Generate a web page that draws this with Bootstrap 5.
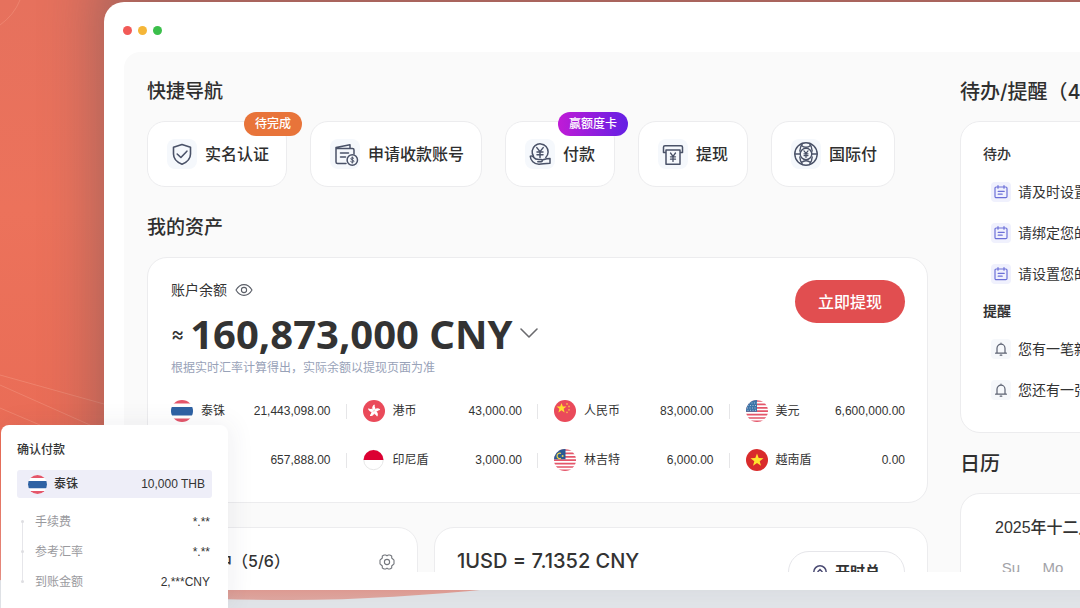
<!DOCTYPE html>
<html lang="zh-CN">
<head>
<meta charset="utf-8">
<meta name="viewport" content="width=device-width, initial-scale=1">
<title>账户总览</title>
<link href="https://cdn.jsdelivr.net/npm/bootstrap@5.3.0/dist/css/bootstrap.min.css" rel="stylesheet">
<style>
  body { font-family: Inter, "Noto Sans CJK SC", sans-serif; font-size: 14px; line-height: 20px; color: #333; background: #e2e5e9; }
  button { font-family: inherit; }
  .stage { padding: 2px 0 18px 104px; }
  .backdrop-art { position: absolute; inset: 0; width: 100%; height: 100%; }
  .app-window { margin-right: -240px; padding: 50px 20px 18px; border-radius: 20px; background: #fff; box-shadow: -6px -36px 56px rgba(70, 80, 92, .42); }
  .window-dots { position: absolute; top: 24px; left: 19px; }
  .window-dots span { width: 9px; height: 9px; border-radius: 50%; }
  .panel { padding: 26px 23px 0; border-radius: 16px 16px 0 0; background: #fafafa; }
  .side-col { width: 317px; }
  .section-title { font-size: 19px; line-height: 28px; font-weight: 500; margin: 0 0 15px; color: #2f2f2f; }
  .side-col .section-title { font-size: 20px; }
  .tile { background: #fff; border: 1px solid #ececee; border-radius: 20px; }

  .quick { height: 66px; min-width: 110px; padding: 0 17px 0 19px; border-radius: 18px; font-size: 16px; font-weight: 500; color: #2f2f2f; }
  .quick .icon-box { width: 30px; height: 30px; margin-right: 8px; border-radius: 8px; background: #f5f8fc; }
  .quick-row { gap: 23px; }
  .tag { position: absolute; top: -10px; right: -14px; height: 24px; line-height: 24px; padding: 0 11px; border-radius: 12px; font-size: 12px; font-weight: 500; color: #fff; }
  .tag-todo { background: #e8743a; right: -16px; }
  .tag-card { background: linear-gradient(90deg, #c01bd6, #6420e4); }

  .assets { padding: 22px 22px 31px 23px; }
  .amount { font-family: "Noto Sans", "Open Sans", sans-serif; font-size: 40px; line-height: 44px; font-weight: 700; }
  .approx { font-size: 20px; line-height: 44px; }
  .hint { font-size: 12px; line-height: 16px; color: #98a2b8; }
  .btn-withdraw { width: 110px; height: 43px; border: 0; border-radius: 22px; background: #e14e50; color: #fff; font-size: 16px; font-weight: 500; }
  .currency-grid { display: grid; grid-template-columns: repeat(4, minmax(0, 1fr)); gap: 27px 32px; margin-top: 24px; font-size: 12px; line-height: 22px; }
  .currency { gap: 8px; }
  .currency:not(:nth-child(4n+1))::before { content: ""; position: absolute; left: -17px; top: 4px; width: 1px; height: 15px; background: #e6e6e8; }
  .figures { font-family: "Liberation Sans", "Noto Sans CJK SC", sans-serif; }

  .lower { gap: 16px; }
  .lower .tile { padding: 19px 22px 40px; min-height: 120px; }
  .progress-tile { width: 271px; }
  .tile-title { font-size: 16px; line-height: 28px; font-weight: 500; margin: 0; }
  .rate { font-size: 20px; line-height: 28px; font-weight: 500; margin: 0; }
  .btn-total { height: 42px; margin-top: 4px; padding: 0 24px; gap: 8px; border: 1px solid #e6e6ea; border-radius: 21px; background: #fff; font-size: 15px; font-weight: 700; color: #333; }

  .todo { padding: 22px 22px 32px; }
  .todo h3 { font-size: 14px; line-height: 20px; font-weight: 500; margin: 0; }
  .todo ul { margin: 18px 0 17px; padding-left: 8px; gap: 21px; }
  .todo ul:last-child { margin-bottom: 0; }
  .todo li { gap: 7px; white-space: nowrap; }
  .todo .icon-box { width: 20px; height: 20px; border-radius: 4px; background: #f0f1fd; }
  .todo .icon-box.bell { background: #f6f8fb; }
  .calendar { padding: 22px 0 40px 34px; margin-right: -40px; font-family: "Liberation Sans", "Noto Sans CJK SC", sans-serif; }
  .calendar h3 { font-size: 16px; line-height: 24px; font-weight: 500; margin: 0 0 18px; }
  .weekdays { display: grid; grid-template-columns: repeat(7, 42px); margin-left: -5px; text-align: center; color: #a3a3a8; font-size: 15px; }

  .pay-card { position: absolute; left: 1px; bottom: 0; width: 227px; padding: 17px 16px 18px; border-radius: 8px 8px 0 0; background: #fff; box-shadow: 4px -2px 24px rgba(60, 60, 80, .07); font-size: 12px; line-height: 16px; }
  .pay-card h2 { font-size: 12px; line-height: 16px; font-weight: 500; margin: 0 0 12px; }
  .pay-target { height: 28px; padding: 0 7px 0 11px; gap: 7px; border-radius: 3px; background: #eeeef8; }
  .pay-lines { margin: 16px 0 0; gap: 14px; padding: 0 2px 0 18px; }
  .pay-lines::before { content: ""; position: absolute; left: 5px; top: 8px; bottom: 8px; width: 1px; background: #e6e6ea; }
  .pay-lines > div::before { content: ""; position: absolute; left: -14px; top: 6px; width: 3px; height: 3px; border-radius: 50%; background: #dedee2; }
  .pay-lines dt { font-weight: 400; color: #9a9a9e; }
</style>
</head>
<body class="vh-100 overflow-hidden">

<svg width="0" height="0" class="position-absolute" aria-hidden="true">
  <defs>
    <clipPath id="round"><circle cx="11" cy="11" r="11"/></clipPath>
    <symbol id="flag-th" viewBox="0 0 22 22"><g clip-path="url(#round)"><path fill="#fff" d="M0 0h22v22H0z"/><path fill="#e4566a" d="M0 0h22v3.600H0zM0 18.600h22V22H0z"/><path fill="#2f62a3" d="M0 7h22v8.400H0z"/></g></symbol>
    <symbol id="i-todo" viewBox="0 0 20 20"><g fill="none" stroke="#6c70d8" stroke-width="1.200" stroke-linecap="round"><rect x="4" y="5" width="12" height="10.600" rx="1.200"/><path d="M7 3.600v2.600M13 3.600v2.600M7.200 9.400h6M7.200 12.200h4"/></g></symbol>
    <symbol id="i-bell" viewBox="0 0 20 20"><g fill="none" stroke="#5c6272" stroke-width="1.200" stroke-linecap="round" stroke-linejoin="round"><path d="M6 14V9.200a4 4 0 0 1 8 0V14M4.600 14.200h10.800M10 5.200V4M9.200 16.200h1.600"/></g></symbol>
  </defs>
</svg>

<div class="stage d-flex h-100 position-relative overflow-hidden">
  <svg class="backdrop-art" viewBox="0 0 1080 608" preserveAspectRatio="none" aria-hidden="true">
    <defs>
      <linearGradient id="coral" x1="0" y1="0" x2="0" y2="1"><stop offset="0" stop-color="#e6715d"/><stop offset=".35" stop-color="#ec725b"/><stop offset=".75" stop-color="#e96c56"/><stop offset=".95" stop-color="#ea8a7c"/><stop offset="1" stop-color="#e0a8a1"/></linearGradient>
    </defs>
    <path fill="url(#coral)" d="M0 0H1080V480C900 520 640 580 490 589C430 595 360 600 290 600C180 600 60 592 0 580Z"/>
    <g fill="none" stroke="#f3937d" stroke-width="1" opacity=".55"><path d="M0 375L104 404M0 385L90 425M0 408L40 425M0 25Q14 15 20 0"/></g>
  </svg>

  <div class="app-window position-relative d-flex flex-column flex-grow-1">
    <div class="window-dots d-flex" style="gap:6px">
      <span style="background:#f25a57"></span><span style="background:#f5b638"></span><span style="background:#3bbf4b"></span>
    </div>

    <div class="panel d-flex flex-grow-1 overflow-hidden" style="gap:32px;min-height:0">
      <main class="flex-grow-1" style="min-width:0">
        <h2 class="section-title">快捷导航</h2>
        <div class="quick-row d-flex">
          <button type="button" class="quick tile d-flex align-items-center position-relative">
            <span class="icon-box"><svg class="d-block" width="30" height="30" fill="none" stroke="#4a5268" stroke-width="1.600" stroke-linecap="round" stroke-linejoin="round"><path d="M15 5.500l8.500 2.800v6.700c0 5-3.700 8.300-8.500 10.200c-4.800-1.900-8.500-5.200-8.500-10.200V8.300z"/><path d="M10.200 15l3.700 3.500 6-6.300"/></svg></span>
            实名认证<span class="tag tag-todo">待完成</span>
          </button>
          <button type="button" class="quick tile d-flex align-items-center">
            <span class="icon-box"><svg class="d-block" width="30" height="30" fill="none" stroke="#4a5268" stroke-width="1.500" stroke-linecap="round" stroke-linejoin="round"><path d="M16 24.500H7.500a1.500 1.500 0 0 1-1.500-1.500V8.500L20 5.800v3.700M6 9.500h16.500a1.500 1.500 0 0 1 1.500 1.500v4M10.500 14h8M10.500 18h5"/><circle cx="22.300" cy="21" r="5.200"/><path stroke-width="1" d="M23.800 19.300c-.8-1-3-.7-3 .5 0 1.400 3.200.9 3.200 2.400 0 1.200-2.400 1.400-3.300.4M22.300 17.900v6.200"/></svg></span>
            申请收款账号
          </button>
          <button type="button" class="quick tile d-flex align-items-center position-relative">
            <span class="icon-box"><svg class="d-block" width="30" height="30" fill="none" stroke="#4a5268" stroke-width="1.500" stroke-linecap="round" stroke-linejoin="round"><path d="M8.600 17.500a8 8 0 1 1 12.200 1"/><path d="M11.800 8.600l3.200 4 3.200-4M15 12.600v6M12 13h6M12 15.700h6"/><path d="M5.300 17.300c1.500-1 2.700 0 3.500 1.200 1 1.500 2.700 2 5 2h2.400c1.500 0 1.500 2.200 0 2.200h-3.400M5.300 17.300c0 4 3.700 8 8.700 8 4 0 5.500-1 11-1v-4.800c-4 0-4.500.5-7.600 1.500"/></svg></span>
            付款<span class="tag tag-card">赢额度卡</span>
          </button>
          <button type="button" class="quick tile d-flex align-items-center">
            <span class="icon-box"><svg class="d-block" width="30" height="30" fill="none" stroke="#4a5268" stroke-width="1.500" stroke-linecap="round" stroke-linejoin="round"><path d="M8 13.500H5.500V8.300a1.500 1.500 0 0 1 1.500-1.500h16a1.500 1.500 0 0 1 1.500 1.500v5.200H22M8 11h14v14.200H8z"/><path stroke-width="1.300" d="M12.500 14l2.500 3.400 2.500-3.400M15 17.400v5M12.500 17.800h5M12.500 20.200h5"/></svg></span>
            提现
          </button>
          <button type="button" class="quick tile d-flex align-items-center">
            <span class="icon-box"><svg class="d-block" width="30" height="30" fill="none" stroke="#4a5268" stroke-width="1.400" stroke-linecap="round" stroke-linejoin="round"><circle cx="15" cy="15" r="11.200"/><circle cx="15" cy="15" r="5.800"/><path d="M3.800 15H9M21 15h5.200M11.500 4.500C9.800 6.500 9 8.800 8.800 12M18.500 4.500c1.700 2 2.500 4.300 2.700 7.500M11.500 25.500C9.800 23.500 9 21.200 8.800 18M18.500 25.500c1.700-2 2.500-4.300 2.700-7.500M10.500 6.500c2.500 2.400 6.500 2.400 9 0M10.500 23.500c2.500-2.400 6.500-2.400 9 0"/><path stroke-width="1.200" d="M13 11.800l2 2.600 2-2.600M15 14.400v4M13 14.800h4M13 16.600h4"/></svg></span>
            国际付
          </button>
        </div>

        <h2 class="section-title" style="margin-top:27px">我的资产</h2>
        <section class="assets tile">
          <div class="d-flex justify-content-between align-items-start">
            <div>
              <div class="d-flex align-items-center" style="gap:8px">账户余额
                <svg width="18" height="14" fill="none" stroke="#5b5f68" stroke-width="1.100"><path d="M1 7C3 3.500 6 1.600 9 1.600S15 3.500 17 7c-2 3.500-5 5.400-8 5.400S3 10.500 1 7z"/><circle cx="9" cy="7" r="2.600"/></svg>
              </div>
              <div class="d-flex align-items-center" style="gap:6px;margin-top:12px">
                <span class="approx">≈</span><span class="amount">160,873,000 CNY</span>
                <svg width="20" height="20" fill="none" stroke="#6a6a6e" stroke-width="1.600" stroke-linecap="round" stroke-linejoin="round"><path d="M2 5l8 8 8-8"/></svg>
              </div>
              <div class="hint" style="margin-top:4px">根据实时汇率计算得出，实际余额以提现页面为准</div>
            </div>
            <button type="button" class="btn-withdraw">立即提现</button>
          </div>

          <div class="currency-grid">
            <div class="currency d-flex align-items-center position-relative"><svg width="22" height="22"><use href="#flag-th"/></svg><span>泰铢</span><span class="figures ms-auto">21,443,098.00</span></div>
            <div class="currency d-flex align-items-center position-relative"><svg width="22" height="22"><circle cx="11" cy="11" r="11" fill="#ea4a5a"/><g fill="#fff"><path id="petal" d="M11 10.800C8.800 9.800 8.400 6.600 11.200 4.600C12.400 5.200 11.200 6.600 12.100 7.600C12.800 8.800 12 10.200 11 10.800z"/><use href="#petal" transform="rotate(72 11 11)"/><use href="#petal" transform="rotate(144 11 11)"/><use href="#petal" transform="rotate(216 11 11)"/><use href="#petal" transform="rotate(288 11 11)"/></g></svg><span>港币</span><span class="figures ms-auto">43,000.00</span></div>
            <div class="currency d-flex align-items-center position-relative"><svg width="22" height="22"><circle cx="11" cy="11" r="11" fill="#ea4a5a"/><path fill="#ffe02e" d="M7.500 3l1.300 3.400 3.700.1-2.900 2.300 1 3.600-3.100-2.100-3.100 2.100 1-3.600L2.500 6.500l3.700-.1z"/><g fill="#f7b24a"><circle cx="13" cy="4" r=".9"/><circle cx="15" cy="6.500" r=".9"/><circle cx="15" cy="9.800" r=".9"/><circle cx="13" cy="12.300" r=".9"/></g></svg><span>人民币</span><span class="figures ms-auto">83,000.00</span></div>
            <div class="currency d-flex align-items-center position-relative"><svg width="22" height="22"><g clip-path="url(#round)"><path fill="#fff" d="M0 0h22v22H0z"/><path stroke="#e4566a" stroke-width="1.700" d="M0 1h22M0 4.400h22M0 7.800h22M0 11.200h22M0 14.600h22M0 18h22M0 21.400h22"/><path fill="#3d74a8" d="M0 0h11v11.800H0z"/><path stroke="#b7cde0" stroke-width=".9" stroke-dasharray="1 1.500" d="M3 3h8M1.500 5.500H11M1 8h10M1.500 10.300H11"/></g></svg><span>美元</span><span class="figures ms-auto">6,600,000.00</span></div>
            <div class="currency d-flex align-items-center position-relative"><span class="figures ms-auto">657,888.00</span></div>
            <div class="currency d-flex align-items-center position-relative"><svg width="22" height="22"><circle cx="10.500" cy="11" r="9.700" fill="#fff" stroke="#ddd" stroke-width=".7"/><path fill="#dc0032" d="M.5 11a10 10 0 0 1 20 0z"/></svg><span>印尼盾</span><span class="figures ms-auto">3,000.00</span></div>
            <div class="currency d-flex align-items-center position-relative"><svg width="22" height="22"><g clip-path="url(#round)"><path fill="#fff" d="M0 0h22v22H0z"/><path stroke="#e4566a" stroke-width="1.700" d="M0 1h22M0 4.400h22M0 7.800h22M0 11.200h22M0 14.600h22M0 18h22M0 21.400h22"/><path fill="#2b5a94" d="M0 0h11.500v10.300H0z"/><path fill="none" stroke="#f2d64a" stroke-width="1.200" d="M7 4.500a2.700 2.700 0 1 0 0 4.800"/><circle cx="8.600" cy="6.900" r="1" fill="#f2d64a"/></g></svg><span>林吉特</span><span class="figures ms-auto">6,000.00</span></div>
            <div class="currency d-flex align-items-center position-relative"><svg width="22" height="22"><circle cx="11" cy="11" r="11" fill="#d92b2b"/><path fill="#ffe52e" d="M11 4.500l1.700 4.500 4.800.2-3.800 3 1.300 4.600-4-2.700-4 2.700 1.300-4.600-3.800-3 4.800-.2z"/></svg><span>越南盾</span><span class="figures ms-auto">0.00</span></div>
          </div>
        </section>

        <div class="lower d-flex mt-4">
          <section class="progress-tile tile d-flex justify-content-between align-items-start">
            <h3 class="tile-title" style="padding-left:14px">进行中（5/6）</h3>
            <svg width="16" height="16" style="margin-top:7px" fill="none" stroke="#74777d" stroke-width="1.100" stroke-linejoin="round" aria-hidden="true"><path d="M5.200 1h1.500l1.300.9L9.300 1h1.500l1.900 1v2l2.300 2.200v3.600L12.700 12v2l-1.900 1H9.300L8 14.100l-1.300.9H5.200l-1.900-1v-2L1 9.800V6.200L3.300 4V2z"/><circle cx="8" cy="8" r="2.600"/></svg>
          </section>
          <section class="tile flex-grow-1 d-flex justify-content-between align-items-start">
            <h3 class="rate">1USD = 7.1352 CNY</h3>
            <button type="button" class="btn-total d-flex align-items-center"><svg width="14" height="16" fill="none" stroke="#4a4a72" stroke-width="1.500"><path d="M.8 8a6.200 6.200 0 0 1 12.400 0M5 11V7.500l2-2 2 2V11"/></svg>开时总</button>
          </section>
        </div>
      </main>

      <aside class="side-col flex-shrink-0">
        <h2 class="section-title">待办/提醒（4）</h2>
        <section class="todo tile">
          <h3>待办</h3>
          <ul class="list-unstyled d-flex flex-column">
            <li class="d-flex"><span class="icon-box"><svg class="d-block" width="20" height="20"><use href="#i-todo"/></svg></span>请及时设置支付密码</li>
            <li class="d-flex"><span class="icon-box"><svg class="d-block" width="20" height="20"><use href="#i-todo"/></svg></span>请绑定您的手机号</li>
            <li class="d-flex"><span class="icon-box"><svg class="d-block" width="20" height="20"><use href="#i-todo"/></svg></span>请设置您的安全问题</li>
          </ul>
          <h3 class="fw-bold">提醒</h3>
          <ul class="list-unstyled d-flex flex-column">
            <li class="d-flex"><span class="icon-box bell"><svg class="d-block" width="20" height="20"><use href="#i-bell"/></svg></span>您有一笔新的收款</li>
            <li class="d-flex"><span class="icon-box bell"><svg class="d-block" width="20" height="20"><use href="#i-bell"/></svg></span>您还有一张优惠券</li>
          </ul>
        </section>
        <h2 class="section-title" style="margin-top:17px">日历</h2>
        <section class="calendar tile">
          <h3>2025年十二月</h3>
          <div class="weekdays"><span>Su</span><span>Mo</span><span>Tu</span><span>We</span><span>Th</span><span>Fr</span><span>Sa</span></div>
        </section>
      </aside>
    </div>
  </div>

  <section class="pay-card">
    <h2>确认付款</h2>
    <div class="pay-target d-flex align-items-center"><svg width="19" height="19"><use href="#flag-th"/></svg><span class="fw-medium">泰铢</span><span class="figures ms-auto">10,000 THB</span></div>
    <dl class="pay-lines position-relative d-flex flex-column">
      <div class="position-relative d-flex justify-content-between"><dt>手续费</dt><dd class="figures m-0">*.**</dd></div>
      <div class="position-relative d-flex justify-content-between"><dt>参考汇率</dt><dd class="figures m-0">*.**</dd></div>
      <div class="position-relative d-flex justify-content-between"><dt>到账金额</dt><dd class="figures m-0">2,***CNY</dd></div>
    </dl>
  </section>
</div>
<script src="https://cdn.jsdelivr.net/npm/bootstrap@5.3.0/dist/js/bootstrap.bundle.min.js"></script>
</body>
</html>
